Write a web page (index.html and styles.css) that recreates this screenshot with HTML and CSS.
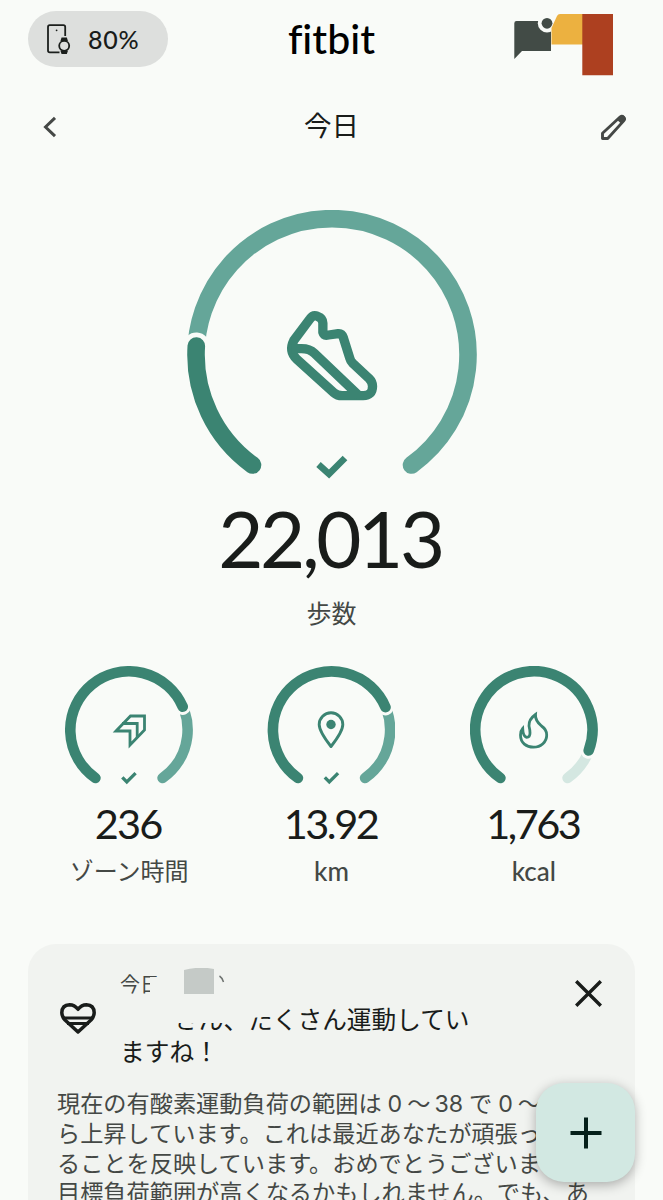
FILE: index.html
```html
<!DOCTYPE html>
<html lang="ja">

<head>
    <meta charset="UTF-8">
    <meta name="viewport" content="width=device-width, initial-scale=1.0">
    <title>fitbit</title>
    <link rel="stylesheet" href="styles.css">
</head>

<body>

    <!-- ヘッダー -->
    <header>
        <div class="battery">
            <svg width="24" height="30" viewBox="0 0 24 30" fill="none" stroke="#1b1f1c" stroke-width="1.8">
                <path d="M18.2 12V3Q18.2 1.2 16.4 1.2H2.8Q1 1.2 1 3V26.5Q1 28.300 2.800 28.300H12.500" />
                <circle cx="9.600" cy="6.300" r=".9" fill="#1b1f1c" stroke="none" />
                <circle cx="17.200" cy="21.800" r="5" />
                <path d="M14.700 16L15.200 14.500H19.200L19.700 16ZM14.700 27.600L15.200 29H19.200L19.700 27.600Z" fill="#1b1f1c" />
            </svg>
            <span>80%</span>
        </div>
        <div class="logo">fitbit</div>
        <svg class="account" width="99" height="62" viewBox="0 0 99 62">
            <path d="M2.500 7H37V37H8L.3 45V9.200Q.3 7 2.500 7Z" fill="#424b46" />
            <circle cx="33" cy="9.300" r="9.200" fill="#f9fbf8" />
            <path d="M37.500 30.500V14L43 2Q44 0 46 0H69V30.500Z" fill="#ecb140" />
            <circle cx="33" cy="9.300" r="5.400" fill="#424b46" />
            <path d="M68.300 0H99V61.300H68.300Z" fill="#ad4020" />
        </svg>
    </header>

    <!-- 日付 -->
    <nav>
        <svg width="14" height="22" viewBox="0 0 14 22" fill="none" stroke="#454846" stroke-width="3">
            <path d="M12 1.800L2.500 11L12 20.200" />
        </svg>
        <h1>今日</h1>
        <svg width="27" height="27" viewBox="0 0 27 27">
            <path d="M2.500 24.500V19.200L20.300 2.800Q22 1.500 23.700 3.200Q25.300 5 23.900 6.600L7.700 24.500Z" fill="none" stroke="#454846" stroke-width="2.900" stroke-linejoin="round" />
            <path d="M16.800 5.500L20.500 2Q22.500 .5 24.500 2.500Q26.500 4.700 24.900 6.500L21.400 10Z" fill="#454846" />
        </svg>
    </nav>

    <!-- 歩数 -->
    <section class="steps">
        <svg width="290" height="270" viewBox="0 0 290 270" fill="none" stroke-linecap="round">
            <path class="rest" d="M65.500 255A136 136 0 1 1 224.500 255" stroke-width="17.600" />
            <path class="gap" d="M65.500 255A136 136 0 0 1 9.300 136" stroke-width="27" stroke-linecap="round" />
            <path class="done" d="M65.500 255A136 136 0 0 1 9.300 136" stroke-width="17.600" />
            <g class="done" transform="translate(100.200 101) scale(.3333)" stroke-width="28" stroke-linejoin="round" stroke-linecap="butt">
                <path d="M20 88L68 24Q78 10 91 16Q107 22 107 36V64Q110 75 124 72L153 68Q164 67 168 79L188 142Q190 150 197 157L246 203Q256 213 256 226Q256 254 228 254H165Q150 254 140 245L28 144Q4 120 20 88Z" />
                <path d="M14 113H43Q67 113 82 127L215 254" />
            </g>
            <path class="done" d="M131.500 254.500L142 264L158 248" stroke-width="6.600" stroke-linecap="butt" />
        </svg>
        <div class="steps-value">22,013</div>
        <div class="label">歩数</div>
    </section>

    <!-- その他の指標 -->
    <section class="stats">
        <div class="stat">
            <svg width="128" height="122" viewBox="0 0 128 122" fill="none" stroke-linecap="round">
                <path class="rest" d="M30.400 112A58.600 58.600 0 1 1 97.600 112" stroke-width="10.600" />
                <path class="gap" d="M30.400 112A58.600 58.600 0 1 1 117.700 40.700" stroke-width="16.500" />
                <path class="done" d="M30.400 112A58.600 58.600 0 1 1 117.700 40.700" stroke-width="10.600" />
                <g class="done" stroke-width="2.800" stroke-linecap="butt">
                    <path d="M51 65L65.500 50H79.500V64L65 79V65Z" />
                    <path d="M57 57.500H72.200V72" />
                </g>
                <path class="done" d="M57.300 111.400L61.800 116L70.600 107.200" stroke-width="3.300" stroke-linecap="butt" />
            </svg>
            <div class="value">236</div>
            <div class="label">ゾーン時間</div>
        </div>
        <div class="stat">
            <svg width="128" height="122" viewBox="-.5 0 128 122" fill="none" stroke-linecap="round">
                <path class="rest" d="M30.400 112A58.600 58.600 0 1 1 97.600 112" stroke-width="10.600" />
                <path class="gap" d="M30.400 112A58.600 58.600 0 1 1 118 41.200" stroke-width="16.500" />
                <path class="done" d="M30.400 112A58.600 58.600 0 1 1 118 41.200" stroke-width="10.600" />
                <path class="done" d="M63.500 80.500Q51.700 65.500 51.700 58.500A11.800 11.800 0 0 1 75.300 58.500Q75.300 65.500 63.500 80.500Z" stroke-width="2.900" stroke-linejoin="round" />
                <circle class="dot" cx="63.500" cy="58.500" r="4.700" />
                <path class="done" d="M57.300 111.400L61.800 116L70.600 107.200" stroke-width="3.300" stroke-linecap="butt" />
            </svg>
            <div class="value">13.92</div>
            <div class="label latin">km</div>
        </div>
        <div class="stat">
            <svg width="128" height="122" viewBox="0 0 128 122" fill="none" stroke-linecap="round">
                <path class="todo" d="M30.400 112A58.600 58.600 0 1 1 97.600 112" stroke-width="10.600" />
                <path class="gap" d="M30.400 112A58.600 58.600 0 1 1 118.700 84.500" stroke-width="16.500" />
                <path class="done" d="M30.400 112A58.600 58.600 0 1 1 118.700 84.500" stroke-width="10.600" />
                <path class="done" d="M65.500 48.500Q58.500 53.500 59 60Q60 64 60 67Q60 71.300 56.800 71.300Q53 70.500 52.700 62.500Q50.500 65 50.500 69C50.500 77 56.500 81.200 63.500 81.200C71 81.200 76.700 76 76.700 69Q76.700 63.500 71.500 60Q65 54.500 65.500 48.500Z" stroke-width="2.800" stroke-linejoin="miter" />
            </svg>
            <div class="value">1,763</div>
            <div class="label latin">kcal</div>
        </div>
    </section>

    <!-- お知らせカード -->
    <section class="card">
        <div class="card-head">
            <svg class="heart" width="36" height="32" viewBox="0 0 36 32" fill="none" stroke="#191c1a" stroke-width="3.500">
                <path d="M18 29L5 17Q1.800 13.500 1.800 9.800Q2 2 9.500 1.800Q14.500 1.800 18 6.300Q21.500 1.800 26.500 1.800Q34 2 34.200 9.800Q34.200 13.500 31 17Z" stroke-linejoin="round" />
                <path d="M4 15H32M7 20.500H29" stroke-width="3" />
            </svg>
            <div class="card-text">
                <div class="card-date">今日
                    <span class="date-mask"></span>
                    <svg class="smudge" width="41" height="27" viewBox="0 0 41 27">
                        <path d="M0 2Q16-2 30 1V26H0Z" fill="#c5cac7" />
                        <path d="M35.500 8Q38 9.500 39.500 14" fill="none" stroke="#6d716f" stroke-width="1.500" />
                    </svg>
                </div>
                <h2><span class="name">さん、</span>たくさん運動してい<br>ますね！<span class="name-mask"></span></h2>
            </div>
            <svg class="close" width="27" height="27" viewBox="0 0 27 27" stroke="#191c1a" stroke-width="3.400">
                <path d="M1.200 1.200L25.800 25.800M25.800 1.200L1.200 25.800" />
            </svg>
        </div>
        <p>現在の有酸素運動負荷の範囲は <span class="num">0</span>〜<span class="num upper">38</span> で <span class="num">0</span>〜<br>
            ら上昇しています。これは最近あなたが頑張ってい<br>
            ることを反映しています。おめでとうございます。<br>
            目標負荷範囲が高くなるかもしれません。でも、あ</p>
    </section>

    <!-- 追加ボタン -->
    <button class="add">
        <svg width="32" height="32" viewBox="0 0 32 32" stroke="#05201a" stroke-width="4">
            <path d="M16 .5V31.500M.5 16H31.500" />
        </svg>
    </button>

</body>

</html>
```

FILE: styles.css
```css
* {
    margin: 0;
    padding: 0;
    box-sizing: border-box;
}

body {
    width: 663px;
    height: 1200px;
    overflow: hidden;
    position: relative;
    display: flex;
    flex-direction: column;
    background-color: #f9fbf8;
    color: #191c1a;
    font-family: Lato, 'Noto Sans CJK JP', sans-serif;
}

svg {
    display: block;
}

/* ヘッダー */
header {
    display: grid;
    grid-template-columns: 1fr auto 1fr;
    align-items: start;
    height: 78px;
    padding: 11px 28px 0;
}

.battery {
    display: flex;
    align-items: center;
    gap: 17px;
    width: 140px;
    height: 56px;
    padding-left: 19px;
    border-radius: 28px;
    background-color: #dddfdd;
    font-size: 25px;
    font-weight: 500;
    letter-spacing: 0.7px;
}

.logo {
    font-size: 41px;
    font-weight: 500;
    line-height: 56px;
    font-variant-ligatures: none;
    color: #000;
}

.account {
    justify-self: end;
    margin: 3px 22px 0 0;
}

/* 日付 */
nav {
    display: grid;
    grid-template-columns: 1fr auto 1fr;
    align-items: center;
    height: 98px;
    padding: 0 36px 0 43px;
}

nav h1 {
    font-size: 27.5px;
    font-weight: 400;
    line-height: 40px;
    margin: -2px 7px 0 0;
}

nav svg:last-child {
    justify-self: end;
}

/* リング */
.done {
    stroke: #3b8472;
}

.rest {
    stroke: #65a699;
}

.todo {
    stroke: #d4e7e1;
}

.gap {
    stroke: #f9fbf8;
}

.dot {
    fill: #3b8472;
}

.steps {
    display: flex;
    flex-direction: column;
    align-items: center;
    padding-top: 34px;
}

.steps-value {
    font-size: 78px;
    line-height: 90px;
    margin: 13px 3px 0 0;
    letter-spacing: -3.4px;
}

.label {
    font-size: 25px;
    line-height: 36px;
    color: #444845;
}

.steps .label {
    margin-top: 12px;
}

.stats {
    display: grid;
    grid-template-columns: repeat(3, 1fr);
    padding: 35px 28px 0;
}

.stat {
    display: flex;
    flex-direction: column;
    align-items: center;
}

.value {
    font-size: 41.5px;
    line-height: 50px;
    margin: 10px 2px 0 0;
    letter-spacing: -2.5px;
}

.stat:first-child .value {
    letter-spacing: -1.8px;
}

.stat .label {
    font-size: 24px;
    margin-top: 5px;
}

.stat .latin {
    font-size: 26px;
    font-weight: 500;
}

/* カード */
.card {
    flex: 1;
    min-height: 0;
    width: 607px;
    margin: 55px 0 0 28px;
    padding: 24px 29px 0;
    border-radius: 28px 28px 0 0;
    background-color: #f1f3f0;
}

.card-head {
    display: flex;
    align-items: flex-start;
}

.heart {
    margin: 35px 24px 0 3px;
}

.card-text {
    flex: 1;
}

.card-date {
    position: relative;
    font-size: 20px;
    line-height: 32px;
    color: #444845;
}

.date-mask {
    position: absolute;
    top: 9px;
    left: 30px;
    width: 70px;
    height: 21px;
    background-color: #f1f3f0;
}

.smudge {
    position: absolute;
    top: 0;
    left: 64px;
}

.card h2 {
    position: relative;
    margin-top: 4px;
    font-size: 24.7px;
    font-weight: 400;
    line-height: 32px;
}

.name {
    padding-left: 54px;
}

/* 名前を隠す */
.name-mask {
    position: absolute;
    top: 0;
    left: 40px;
    width: 112px;
    height: 19px;
    background-color: #f1f3f0;
    clip-path: polygon(0 0, 100% 0, 100% 12px, 90px 14px, 74px 19px, 0 19px);
}

.close {
    margin: 12px 4px 0 0;
}

.card p {
    margin-top: 21px;
    font-size: 23.2px;
    line-height: 29.3px;
    color: #444845;
    white-space: nowrap;
}

.num {
    font-family: Inter, sans-serif;
    margin-right: 5px;
}

.upper {
    margin: 0 0 0 4px;
}

/* 追加ボタン */
.add {
    position: absolute;
    top: 1083px;
    left: 536px;
    display: flex;
    align-items: center;
    justify-content: center;
    width: 99px;
    height: 99px;
    border: none;
    border-radius: 28px;
    background-color: #d2e8e2;
    box-shadow: 0 3px 12px rgba(0, 0, 0, 0.3);
}
```
